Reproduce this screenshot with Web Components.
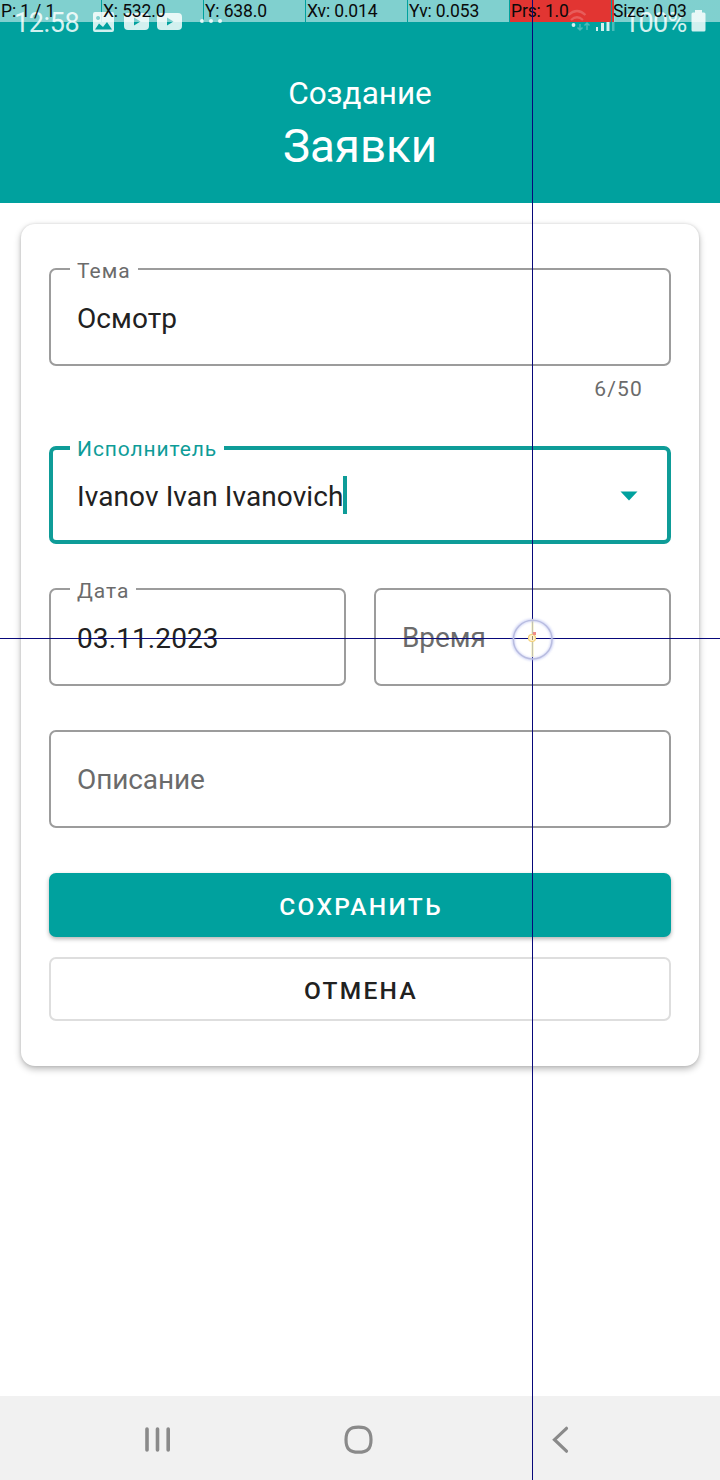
<!DOCTYPE html>
<html lang="ru">
<head>
<meta charset="utf-8">
<title>Создание заявки</title>
<style>
html,body{margin:0;padding:0;background:#fff}
body{font-family:Roboto,"Liberation Sans",sans-serif;color:#212121;width:720px;height:1480px;overflow:hidden}
</style>
</head>
<body>
<request-screen></request-screen>
<script>
const define = (name, html, setup) => {
  const tpl = document.createElement('template');
  tpl.innerHTML = html;
  customElements.define(name, class extends HTMLElement {
    constructor() {
      super();
      this.attachShadow({mode: 'open'}).appendChild(tpl.content.cloneNode(true));
    }
    connectedCallback() { if (setup) setup(this, this.shadowRoot); }
  });
};

define('status-bar', `
<style>
:host{display:flex;align-items:center;height:44px;box-sizing:border-box;padding:0 14px 0 14px;color:#d2f0ef}
.t{font-size:27px;line-height:44px;letter-spacing:-.4px;width:79px}
.p{font-size:27px;line-height:44px;letter-spacing:-.7px;margin-left:8px;width:67px}
.t,.p{position:relative;top:1px}
.sp{flex:1}
svg{display:block}
</style>
<span class="t">12:58</span>
<svg width="132" height="44" viewBox="93 0 132 44" fill="#d2f0ef">
  <path fill-rule="evenodd" d="M95 12H112Q114 12 114 14V30Q114 32 112 32H95Q93 32 93 30V14Q93 12 95 12ZM95 29.500H112L107 22L103 27L99 23.500ZM98 16a2 2 0 1 0 .1 0Z"/>
  <path fill-rule="evenodd" d="M128 13H145Q149 13 149 17V26Q149 30 145 30H128Q124 30 124 26V17Q124 13 128 13ZM134 17.500V25.500L140.500 21.500Z"/>
  <path fill-rule="evenodd" d="M161 13H178Q182 13 182 17V26Q182 30 178 30H161Q157 30 157 26V17Q157 13 161 13ZM167 17.500V25.500L173.500 21.500Z"/>
  <circle cx="202" cy="21" r="2"/><circle cx="211" cy="21" r="2"/><circle cx="220" cy="21" r="2"/>
</svg>
<span class="sp"></span>
<svg width="50" height="44" viewBox="566 0 50 44">
  <path fill="none" stroke="#d2f0ef" opacity=".35" stroke-width="1.500" d="M580 24V30M577.500 27.500L580 30L582.500 27.500M587 30V23M584.500 25.500L587 23L589.500 25.500"/>
  <circle cx="573.500" cy="25" r="1.900" fill="#d2f0ef"/>
  <g fill="#d2f0ef"><path d="M596 27h2v4h-2zM601 23h3v8h-3zM606.500 19.500h3v11.500h-3z"/><path opacity=".35" d="M612 15h2.500v16h-2.500z"/></g>
</svg>
<span class="p">100%</span>
<svg width="15" height="44" viewBox="0 0 15 44" fill="#d2f0ef"><path d="M4 10H11V12.500H13Q14.500 12.500 14.500 14V30Q14.500 31.500 13 31.500H2Q.5 31.500 .5 30V14Q.5 12.500 2 12.500H4Z"/></svg>
`);

define('pointer-strip', `
<style>
:host{display:grid;grid-template-columns:repeat(6,101px) 108px;column-gap:1px;height:22px;color:#0a0a0a;font-size:17.500px;letter-spacing:-.14px;line-height:22px;white-space:nowrap}
span{background:rgba(255,255,255,.5);padding-left:1px}
.r{background:#e23532}
.s{background:linear-gradient(90deg,#e23532 2px,rgba(255,255,255,.5) 2px)}
</style>
<span>P: 1 / 1</span><span>X: 532.0</span><span>Y: 638.0</span><span>Xv: 0.014</span><span>Yv: 0.053</span><span class="r">Prs: 1.0</span><span class="s">Size: 0.03</span>
`);

define('page-header', `
<style>
:host{display:flex;flex-direction:column;align-items:center;height:203px;background:#00a19e;color:#fff}
status-bar{align-self:stretch}
.a{font-size:31.500px;line-height:38px;margin-top:31px}
.b{font-size:45.700px;line-height:54px;margin-top:7px}
</style>
<status-bar></status-bar>
<div class="a"><slot name="over"></slot></div>
<div class="b"><slot></slot></div>
`);

define('text-field', `
<style>
:host{display:flex;position:relative;box-sizing:border-box;height:98px;border:2px solid #9c9c9c;border-radius:7px;padding:0 26px;align-items:center;font-size:28px;line-height:34px}
:host([focused]){border:4px solid #0e9c98;padding:0 24px}
label{position:absolute;left:19px;top:-13px;padding:0 7px;background:#fff;font-size:21px;line-height:28px;letter-spacing:1px;color:#6b6b6b;white-space:nowrap}
:host([focused]) label{left:17px;top:-15px;color:#0e9c98;letter-spacing:.9px}
label:empty{display:none}
.v{margin-top:3px;white-space:nowrap;letter-spacing:.1px}
.ph{color:#6b6b6b;margin-top:1px;letter-spacing:-.1px}
i{width:4px;height:38px;background:#0e9c98;margin:-1px 0 0 -1px}
svg{margin-left:auto;margin-right:5px;margin-top:2px}
i,svg{display:none}
:host([focused]) i,:host([focused]) svg{display:block}
</style>
<label></label><span class="v"><slot></slot></span><i></i>
<svg width="18" height="10" viewBox="0 0 18 10"><path d="M.5.500H17.500L9 9.500Z" fill="#00a19e"/></svg>
`, (el, root) => {
  root.querySelector('label').textContent = el.getAttribute('label') || '';
  if (el.hasAttribute('empty')) root.querySelector('.v').classList.add('ph');
});

define('action-button', `
<style>
:host{display:flex;align-items:center;justify-content:center;box-sizing:border-box;height:64px;border-radius:7px;font-size:24.500px;line-height:30px;font-weight:500;letter-spacing:2.300px;background:#fff;border:2px solid #dedede;color:#212121}
:host([primary]){background:#00a19e;border:0;color:#fff;box-shadow:0 2px 4px rgba(0,0,0,.3)}
span{margin:4px 0 0 2px}
</style><span><slot></slot></span>`);

define('form-card', `
<style>
:host{display:flex;flex-direction:column;margin:21px 21px 0;box-sizing:border-box;height:842px;padding:44px 28px 0;border-radius:14px;background:#fff;box-shadow:0 3px 7px rgba(0,0,0,.28),0 0 3px rgba(0,0,0,.12)}
</style><slot></slot>`);

define('nav-bar', `
<style>
:host{display:grid;grid-template-columns:30px 30px 30px;justify-content:start;column-gap:171px;padding-left:143px;height:84px;align-items:center;background:#f1f1f1;box-sizing:border-box}
svg{display:block;margin-top:4px}
</style>
<svg width="30" height="30" fill="none" stroke="#8a8a8a" stroke-width="3.600" stroke-linecap="round"><path d="M4 4V25M14.500 4V25M25.200 4V25"/></svg>
<svg width="30" height="30" fill="none" stroke="#8a8a8a" stroke-width="3.200"><path d="M14.500 2.200C23.500 2.200 27 5.700 27 14.700S23.500 27.200 14.500 27.200S2 23.700 2 14.700S5.500 2.200 14.500 2.200Z"/></svg>
<svg width="30" height="30" fill="none" stroke="#8a8a8a" stroke-width="3.200" stroke-linecap="round"><path d="M21.500 3.300L9.500 14.700L21.500 26.200"/></svg>
`);

define('touch-overlay', `
<style>
:host{position:absolute;inset:0;pointer-events:none}
svg{display:block;position:absolute;left:0;top:0}
pointer-strip{position:absolute;left:0;top:0;width:720px}
</style>
<pointer-strip></pointer-strip>
<svg width="720" height="1480" viewBox="0 0 720 1480">
  <defs><filter id="b" x="-20%" y="-20%" width="140%" height="140%"><feGaussianBlur stdDeviation="1"/></filter></defs>
  <path d="M568.500 15Q577 7 585.500 15M571 20Q577 14.500 583 20" fill="none" stroke="#fff" stroke-width="2.200" opacity=".2"/>
  <path d="M532 0h1v1480h-1zM0 638h720v1h-720z" fill="#08087a"/>
  <rect x="531" y="619" width="3" height="38" fill="#f6f3cf" opacity=".85"/>
  <path d="M532 622h1v34h-1z" fill="#a9a68e" opacity=".35"/>
  <circle cx="532.700" cy="639.700" r="19.500" fill="none" stroke="#aab2ee" stroke-width="3" opacity=".55" filter="url(#b)"/>
  <circle cx="532.700" cy="639.700" r="19.300" fill="none" stroke="#b8bcdf" stroke-width="1.400"/>
  <circle cx="532" cy="638" r="3.500" fill="#fff3d0" stroke="#f3cf78" stroke-width="1.200"/>
  <path d="M532 636h1v4h-1z" fill="#9c8f6a"/>
  <rect x="533" y="632" width="3" height="3" fill="#f08d87"/>
</svg>`);

define('request-screen', `
<style>
:host{display:flex;flex-direction:column;position:relative;width:720px;height:1480px;background:#fff;overflow:hidden}
.c{font-size:21px;line-height:28px;letter-spacing:1.200px;color:#6b6b6b;text-align:right;padding:9px 28px 0 0;height:71px}
.row{display:grid;grid-template-columns:297px 297px;gap:28px;margin:44px 0}
.save{margin-top:45px}
.cancel{margin-top:20px}
nav-bar{margin-top:auto}
</style>
<page-header><span slot="over">Создание</span>Заявки</page-header>
<form-card>
  <text-field label="Тема">Осмотр</text-field>
  <div class="c">6/50</div>
  <text-field label="Исполнитель" focused>Ivanov Ivan Ivanovich</text-field>
  <div class="row"><text-field label="Дата">03.11.2023</text-field><text-field empty>Время</text-field></div>
  <text-field empty>Описание</text-field>
  <action-button class="save" primary>СОХРАНИТЬ</action-button>
  <action-button class="cancel">ОТМЕНА</action-button>
</form-card>
<nav-bar></nav-bar>
<touch-overlay></touch-overlay>`);
</script>
</body>
</html>
